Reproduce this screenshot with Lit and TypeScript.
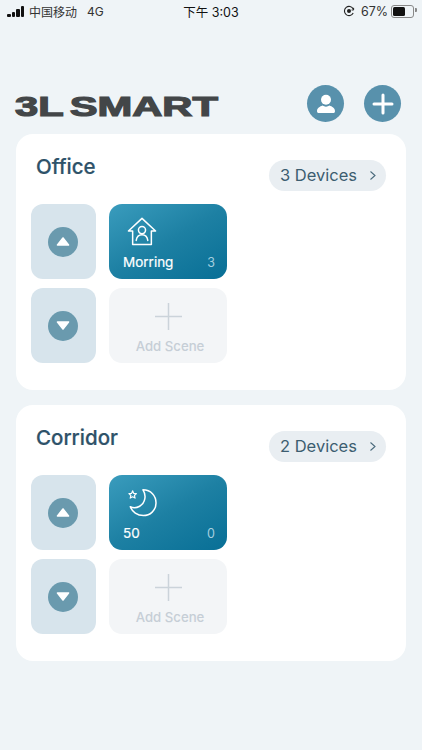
import { LitElement, html, css } from "lit";
import { customElement } from "lit/decorators.js";

const arrow = (up: boolean) => html`<div class="arrow"><span class="disc"><svg width="14" height="11" viewBox="0 0 14 11"><path d="${up ? "M7 2 L12.5 9 H1.5 Z" : "M7 9 L12.5 2 H1.5 Z"}" fill="#fff" stroke="#fff" stroke-width="1.6" stroke-linejoin="round"/></svg></span></div>`;

const houseIcon = html`<svg class="ico" width="30" height="29" viewBox="0 0 32 31" fill="none" stroke="#fff" stroke-width="1.6" stroke-linejoin="round" stroke-linecap="round"><path d="M16 1.5 L30.5 15 H26 V29.5 H6 V15 H1.5 Z"/><circle cx="16" cy="14" r="3.8"/><path d="M9.8 25 C10.5 20.5 13 19 16 19 C19 19 21.5 20.5 22.2 25"/></svg>`;

const moonIcon = html`<svg class="ico" width="30" height="29" viewBox="0 0 32 31" fill="none" stroke="#fff" stroke-width="1.6" stroke-linejoin="round" stroke-linecap="round"><path d="M17 2 C25.5 2 31 8.5 31 16 C31 24 24.5 29.5 17.5 29.5 C11 29.5 5.5 25.5 3.5 20 C6.5 21.5 10 21.5 13.5 19.5 C19.5 16 21 8 17 2 Z"/><path d="M6 3 L7.2 5.8 L10 6 L7.9 8 L8.6 10.8 L6 9.3 L3.4 10.8 L4.1 8 L2 6 L4.8 5.8 Z" stroke-width="1.2"/></svg>`;

@customElement("app-root")
export class AppRoot extends LitElement {
  static styles = css`
    :host { display: block; width: 422px; height: 750px; background: #eff4f7; overflow: hidden; font-family: Inter, "Noto Sans CJK SC", sans-serif; }
    .status { height: 22px; display: flex; align-items: center; padding: 0 5px 0 7px; font-size: 13px; color: #333; position: relative; font-family: Inter, "Noto Sans CJK SC", sans-serif; }
    .bars { display: flex; align-items: flex-end; gap: 1px; height: 11px; margin-right: 5px; }
    .bars i { width: 3.5px; background: #111; border-radius: 1px; }
    .carrier { font-size: 12px; }
    .net { margin-left: 10px; font-size: 12px; }
    .time { position: absolute; left: 0; right: 0; text-align: center; font-size: 12.5px; font-weight: 400; pointer-events: none; color: #111; }
    .right { margin-left: auto; display: flex; align-items: center; gap: 3px; font-size: 12.5px; }
    .batt { width: 19px; height: 9px; border: 1px solid #888; border-radius: 3px; padding: 1px; display: flex; margin-right: 3px; position: relative; }
    .batt b { width: 12px; background: #111; border-radius: 1.5px; }
    .batt::after { content: ""; position: absolute; right: -3.5px; top: 2.5px; width: 1.5px; height: 4px; background: #888; border-radius: 0 1px 1px 0; }
    .header { display: flex; align-items: center; height: 112px; padding: 51px 21px 0 15px; box-sizing: border-box; justify-content: space-between; }
    .logo-wrap { width: 205px; height: 28px; margin-top: 6px; }
    .logo { display: inline-block; font-family: "Liberation Sans", sans-serif; font-weight: 700; font-size: 28px; line-height: 28px; color: #434648; -webkit-text-stroke: 1.2px #434648; transform-origin: 0 50%; transform: scale(1.49, 0.96); white-space: nowrap; }
    .logo span { margin-left: 4px; }
    .actions { display: flex; gap: 20px; }
    .round { width: 37px; height: 37px; border-radius: 50%; background: #5891ac; display: flex; align-items: center; justify-content: center; }
    .card { background: #fff; border-radius: 17px; margin: 0 16px 15px; height: 256px; padding: 0 15px; box-sizing: border-box; }
    .card-head { height: 70px; display: flex; align-items: center; justify-content: space-between; padding: 0 5px; }
    .title { font-size: 20.5px; font-weight: 500; color: #2e5269; margin-top: -5px; -webkit-text-stroke: 0.2px #2e5269; }
    .pill { width: 117px; height: 31px; border-radius: 16px; background: #e9eef2; display: flex; align-items: center; box-sizing: border-box; padding: 0 9px 0 11px; justify-content: space-between; color: #3c5d70; font-size: 16.5px; font-weight: 400; font-family: Inter, sans-serif; margin-top: 12px; }
    .grid { display: grid; grid-template-columns: 65px 118px; grid-auto-rows: 75px; column-gap: 13px; row-gap: 9px; }
    .arrow { background: #d7e4ec; border-radius: 12px; display: flex; align-items: center; justify-content: center; }
    .disc { width: 30px; height: 30px; border-radius: 50%; background: #6a9aae; display: flex; align-items: center; justify-content: center; margin-right: 1px; }
    .scene { border-radius: 13px; background: linear-gradient(150deg, #3a9cbd 0%, #1d80a3 50%, #086f96 100%); display: flex; flex-direction: column; padding: 13px 12px 9px 14px; box-sizing: border-box; color: #fff; justify-content: space-between; }
    .ico { display: block; margin-left: 4px; }
    .row { display: flex; justify-content: space-between; align-items: baseline; font-size: 13.5px; font-weight: 400; }
    .row span { -webkit-text-stroke: 0.2px #fff; }
    .row em { font-style: normal; font-size: 12.5px; font-weight: 400; color: #a5cfdf; }
    .add { border-radius: 13px; background: #f3f5f7; display: flex; flex-direction: column; align-items: center; padding-top: 15px; box-sizing: border-box; color: #c6ced6; font-size: 13.2px; font-weight: 500; }
    .add svg { display: block; margin-bottom: 8px; }
    .add span { margin-left: 4px; }
  `;

  private card(name: string, devices: string, icon: unknown, label: string, n: string) {
    return html`<section class="card">
      <div class="card-head">
        <span class="title">${name}</span>
        <span class="pill">${devices}
          <svg width="8" height="11" viewBox="0 0 8 11" fill="none" stroke="#4a6a7c" stroke-width="1.1"><path d="M1.5 1.5 L6 5.5 L1.5 9.5"/></svg>
        </span>
      </div>
      <div class="grid">
        ${arrow(true)}
        <div class="scene">${icon}<div class="row"><span>${label}</span><em>${n}</em></div></div>
        ${arrow(false)}
        <div class="add">
          <svg width="27" height="27" viewBox="0 0 27 27" stroke="#cbd3da" stroke-width="1.5"><path d="M13.5 0 V27 M0 13.5 H27"/></svg>
          <span>Add Scene</span>
        </div>
      </div>
    </section>`;
  }

  render() {
    return html`
      <div class="status">
        <div class="bars"><i style="height:3px"></i><i style="height:5px"></i><i style="height:8px"></i><i style="height:11px"></i></div>
        <span class="carrier">中国移动</span><span class="net">4G</span>
        <span class="time">下午 3:03</span>
        <div class="right">
          <svg width="12" height="12" viewBox="0 0 12 12" fill="none" stroke="#222" stroke-width="1.1"><path d="M10.2 8 A4.6 4.6 0 1 1 10.2 4"/><circle cx="6" cy="6" r="2" fill="#222" stroke="none"/><path d="M10.6 2.8 V5 H8.6" stroke-width="1"/></svg>
          <span style="margin-left:3px">67%</span>
          <div class="batt"><b></b></div>
        </div>
      </div>
      <header class="header">
        <div class="logo-wrap"><div class="logo">3L<span>SMART</span></div></div>
        <div class="actions">
          <div class="round">
            <svg width="20" height="20" viewBox="0 0 20 20" fill="#fff"><circle cx="10" cy="5.8" r="5"/><path d="M1 17.2 C1 14 4 12.5 6.5 11.5 C8.5 13 11.5 13 13.5 11.5 C16 12.5 19 14 19 17.2 C19 18.5 18 19 17 19 H3 C2 19 1 18.5 1 17.2 Z"/></svg>
          </div>
          <div class="round">
            <svg width="22" height="22" viewBox="0 0 22 22" stroke="#fff" stroke-width="3" stroke-linecap="round"><path d="M11 2 V20 M2 11 H20"/></svg>
          </div>
        </div>
      </header>
      ${this.card("Office", "3 Devices", houseIcon, "Morring", "3")}
      ${this.card("Corridor", "2 Devices", moonIcon, "50", "0")}
    `;
  }
}
